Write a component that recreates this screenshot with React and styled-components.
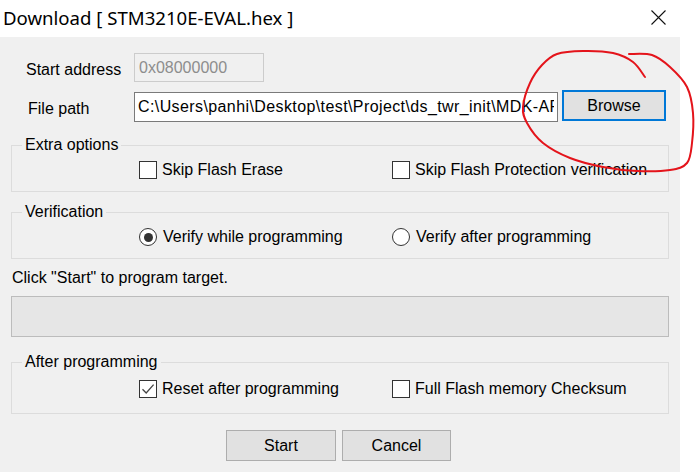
import React from "react";
import styled, { createGlobalStyle } from "styled-components";

const Global = createGlobalStyle`
  html, body { margin: 0; padding: 0; background: #fff; }
  * { box-sizing: border-box; }
`;

const Root = styled.div`
  position: relative;
  width: 696px;
  height: 472px;
  background: #fff;
  display: flex;
  flex-direction: column;
  overflow: hidden;
  font-family: "Liberation Sans", Arial, sans-serif;
  font-size: 16px;
  color: #000;
`;

const TitleBar = styled.div`
  height: 37px;
  flex: none;
  display: flex;
  align-items: center;
  padding-left: 3px;
`;

const Title = styled.div`
  font-family: "Noto Sans", "Liberation Sans", sans-serif;
  font-size: 18.6px;
  line-height: 24px;
  color: #000;
  margin-top: -2px;
`;

const CloseBtn = styled.div`
  margin-left: auto;
  margin-right: 30px;
  width: 15px;
  height: 15px;
  display: flex;
  margin-top: -3px;
`;

const Body = styled.div`
  flex: 1;
  display: flex;
`;

const Panel = styled.div`
  width: 680px;
  background: #f0f0f0;
  padding: 16px 11px 0 11px;
  display: flex;
  flex-direction: column;
`;

const FieldRow = styled.div`
  display: grid;
  grid-template-columns: 123px auto auto;
  justify-content: start;
  align-items: start;
  margin-top: ${(p) => p.$mt || 0}px;
`;

const FieldLabel = styled.div`
  padding-left: ${(p) => p.$indent}px;
  line-height: 18px;
  margin-top: ${(p) => p.$mt || 0}px;
`;

const TextBox = styled.input`
  display: block;
  width: ${(p) => p.$w}px;
  height: ${(p) => p.$h}px;
  margin: ${(p) => p.$mt || 0}px 0 0 0;
  padding: 0 ${(p) => p.$pl}px;
  border: 1px solid ${(p) => (p.disabled ? "#cccccc" : "#7a7a7a")};
  background: ${(p) => (p.disabled ? "#f0f0f0" : "#fff")};
  color: ${(p) => (p.disabled ? "#8d8d8d" : "#000")};
  -webkit-text-fill-color: ${(p) => (p.disabled ? "#8d8d8d" : "#000")};
  font-family: "Liberation Sans", Arial, sans-serif;
  font-size: 16px;
  letter-spacing: ${(p) => p.$ls || 0}px;
  outline: none;
  border-radius: 0;
  opacity: 1;
`;

const Button = styled.button`
  width: ${(p) => p.$w}px;
  height: 31px;
  margin-left: ${(p) => p.$ml || 0}px;
  border: ${(p) => (p.$focused ? "2px solid #0078d7" : "1px solid #adadad")};
  background: #e1e1e1;
  font-family: "Liberation Sans", Arial, sans-serif;
  font-size: 16px;
  color: #000;
  padding: 0;
  border-radius: 0;
`;

const GroupBox = styled.div`
  position: relative;
  border: 1px solid #dcdcdc;
  margin-top: ${(p) => p.$mt}px;
  padding: ${(p) => p.$pt}px 0 ${(p) => p.$pb}px 127px;
`;

const Legend = styled.span`
  position: absolute;
  top: -10px;
  left: 10px;
  padding: 0 3px;
  line-height: 18px;
  background: #f0f0f0;
`;

const OptionGrid = styled.div`
  display: grid;
  grid-template-columns: 253px 1fr;
  align-items: center;
`;

const Option = styled.label`
  display: flex;
  align-items: center;
  gap: ${(p) => p.$gap || 5}px;
  line-height: 18px;
  white-space: nowrap;
`;

const Box = styled.span`
  width: 18px;
  height: 18px;
  flex: none;
  border: 1px solid #333;
  background: #fff;
  display: flex;
  align-items: center;
  justify-content: center;
`;

const RadioCircle = styled.span`
  width: 18px;
  height: 18px;
  flex: none;
  border: 1px solid #333;
  border-radius: 50%;
  background: #fff;
  display: flex;
  align-items: center;
  justify-content: center;
`;

const RadioDot = styled.span`
  width: 9px;
  height: 9px;
  border-radius: 50%;
  background: #333;
`;

const Status = styled.div`
  margin-top: 10px;
  padding-left: 1px;
  line-height: 18px;
`;

const Progress = styled.div`
  margin-top: 9px;
  height: 41px;
  border: 1px solid #bcbcbc;
  background: #e6e6e6;
`;

const ButtonRow = styled.div`
  margin-top: 16px;
  padding-left: 215px;
  display: flex;
  gap: 6px;
`;

const Overlay = styled.svg`
  position: absolute;
  left: 0;
  top: 0;
  pointer-events: none;
`;

function Checkbox({ checked, children }) {
  return (
    <Option>
      <Box>
        {checked && (
          <svg width="14" height="14" viewBox="0 0 14 14">
            <path d="M1.5 7.2 L5.2 11 L12.6 2.6" fill="none" stroke="#444" strokeWidth="1.3" />
          </svg>
        )}
      </Box>
      {children}
    </Option>
  );
}

function Radio({ checked, children }) {
  return (
    <Option $gap={6}>
      <RadioCircle>{checked && <RadioDot />}</RadioCircle>
      {children}
    </Option>
  );
}

const pts = [
  [629, 54], [652, 55], [670, 67], [687, 87], [693, 113], [692, 143], [687, 163],
  [670, 170], [637, 171], [603, 167], [570, 158], [543, 143], [527, 123], [523, 107],
  [530, 83], [542, 65], [557, 54], [583, 51], [613, 53], [633, 62], [645, 77],
];

function smoothPath(p) {
  let d = `M${p[0][0]},${p[0][1]}`;
  for (let i = 0; i < p.length - 1; i++) {
    const p0 = p[i - 1] || p[i];
    const p1 = p[i];
    const p2 = p[i + 1];
    const p3 = p[i + 2] || p2;
    const c1 = [p1[0] + (p2[0] - p0[0]) / 6, p1[1] + (p2[1] - p0[1]) / 6];
    const c2 = [p2[0] - (p3[0] - p1[0]) / 6, p2[1] - (p3[1] - p1[1]) / 6];
    d += ` C${c1[0].toFixed(1)},${c1[1].toFixed(1)} ${c2[0].toFixed(1)},${c2[1].toFixed(1)} ${p2[0]},${p2[1]}`;
  }
  return d;
}

export default function App() {
  return (
    <Root>
      <Global />
      <TitleBar>
        <Title>Download [ STM3210E-EVAL.hex ]</Title>
        <CloseBtn>
          <svg width="15" height="15" viewBox="0 0 15 15">
            <path d="M0.5 0.5 L14.5 14.5 M14.5 0.5 L0.5 14.5" stroke="#111" strokeWidth="1.1" />
          </svg>
        </CloseBtn>
      </TitleBar>
      <Body>
        <Panel>
          <FieldRow>
            <FieldLabel $indent={15} $mt={8}>Start address</FieldLabel>
            <TextBox disabled value="0x08000000" readOnly $w={130} $h={29} $pl={4} />
          </FieldRow>
          <FieldRow $mt={8}>
            <FieldLabel $indent={17} $mt={10}>File path</FieldLabel>
            <TextBox
              readOnly
              value="C:\Users\panhi\Desktop\test\Project\ds_twr_init\MDK-ARM\STM3210E-EVAL.hex"
              $w={424}
              $h={30}
              $pl={3}
              $mt={2}
              $ls={0.4}
            />
            <Button $w={104} $ml={4} $focused>Browse</Button>
          </FieldRow>

          <GroupBox $mt={23} $pt={15} $pb={12}>
            <Legend>Extra options</Legend>
            <OptionGrid>
              <Checkbox>Skip Flash Erase</Checkbox>
              <Checkbox>Skip Flash Protection verification</Checkbox>
            </OptionGrid>
          </GroupBox>

          <GroupBox $mt={20} $pt={15} $pb={12}>
            <Legend>Verification</Legend>
            <OptionGrid>
              <Radio checked>Verify while programming</Radio>
              <Radio>Verify after programming</Radio>
            </OptionGrid>
          </GroupBox>

          <Status>Click "Start" to program target.</Status>
          <Progress />

          <GroupBox $mt={25} $pt={17} $pb={15}>
            <Legend>After programming</Legend>
            <OptionGrid>
              <Checkbox checked>Reset after programming</Checkbox>
              <Checkbox>Full Flash memory Checksum</Checkbox>
            </OptionGrid>
          </GroupBox>

          <ButtonRow>
            <Button $w={110}>Start</Button>
            <Button $w={109}>Cancel</Button>
          </ButtonRow>
        </Panel>
      </Body>
      <Overlay width="696" height="472" viewBox="0 0 696 472">
        <path d={smoothPath(pts)} fill="none" stroke="#e4141b" strokeWidth="2" strokeLinecap="round" strokeLinejoin="round" />
      </Overlay>
    </Root>
  );
}
